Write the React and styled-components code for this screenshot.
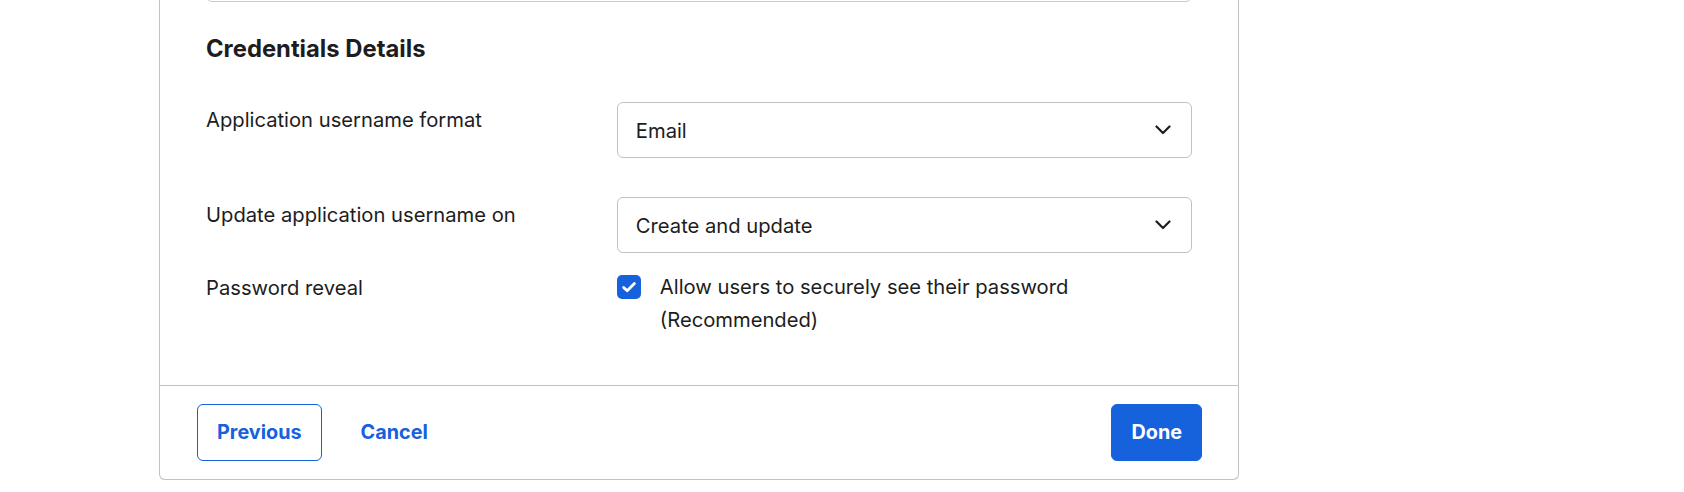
import styled, { createGlobalStyle } from "styled-components";

const GlobalStyle = createGlobalStyle`
  body {
    margin: 0;
    background: #ffffff;
    font-family: Inter, "Noto Sans", "Liberation Sans", sans-serif;
    color: #1d1d21;
    overflow: hidden;
  }
`;

const Card = styled.section`
  box-sizing: border-box;
  width: 1080px;
  margin: -54px 0 0 159px;
  background: #ffffff;
  border: 1px solid #c1c1c8;
  border-top: none;
  border-radius: 0 0 6px 6px;
  box-shadow: 0 3px 3px -2px rgba(29, 29, 33, 0.1);
`;

const Body = styled.div`
  padding: 0 46px 48px;
`;

const PrevField = styled.div`
  box-sizing: border-box;
  height: 56px;
  border: 1px solid #c9c9d0;
  border-radius: 6px;
`;

const Heading = styled.h2`
  margin: 33px 0 38px;
  font-size: 23.8px;
  line-height: 28.8px;
  font-weight: 700;
  letter-spacing: 0;
`;

const Row = styled.div`
  display: grid;
  grid-template-columns: 5fr 7fr;
  margin-bottom: ${(p) => p.$gap ?? 0}px;
`;

const Label = styled.label`
  font-size: 20.2px;
  line-height: 33.6px;
  padding-top: 1px;
`;

const Select = styled.div`
  box-sizing: border-box;
  height: 56px;
  display: flex;
  align-items: center;
  justify-content: space-between;
  padding: 1px 20px 0 18px;
  border: 1px solid #c1c1c8;
  border-radius: 6px;
  font-size: 20.2px;
  line-height: 33.6px;
`;

const CheckRow = styled.div`
  display: flex;
  align-items: flex-start;
  gap: 19px;
`;

const Box = styled.span`
  flex: none;
  width: 24px;
  height: 24px;
  margin-top: 5px;
  border-radius: 5px;
  background: #1662dd;
  display: flex;
  align-items: center;
  justify-content: center;
`;

const CheckText = styled.span`
  max-width: 480px;
  font-size: 20.2px;
  line-height: 33.6px;
`;

const Footer = styled.footer`
  display: flex;
  justify-content: space-between;
  align-items: center;
  padding: 18px 36px 18px 37px;
  border-top: 1px solid #c1c1c8;
`;

const Group = styled.div`
  display: flex;
  gap: 19px;
`;

const Button = styled.button`
  box-sizing: border-box;
  height: 57px;
  padding: 0 19px;
  border-radius: 6px;
  font-family: inherit;
  font-size: 19.8px;
  font-weight: 700;
  cursor: pointer;
  border: 1px solid
    ${(p) => (p.$variant === "ghost" ? "transparent" : "#1662dd")};
  background: ${(p) => (p.$variant === "primary" ? "#1662dd" : "#ffffff")};
  color: ${(p) => (p.$variant === "primary" ? "#ffffff" : "#1662dd")};
`;

const Chevron = () => (
  <svg width="16" height="10" viewBox="0 0 16 10" fill="none">
    <path
      d="M1.5 1.5 8 8l6.5-6.5"
      stroke="#1d1d21"
      strokeWidth="2.2"
      strokeLinecap="round"
      strokeLinejoin="round"
    />
  </svg>
);

const Check = () => (
  <svg width="18" height="18" viewBox="0 0 18 18" fill="none">
    <path
      d="M3.6 9.4 7.2 12.8 14.4 5.4"
      stroke="#ffffff"
      strokeWidth="2.8"
      strokeLinecap="round"
      strokeLinejoin="round"
    />
  </svg>
);

export default function App() {
  return (
    <>
      <GlobalStyle />
      <Card>
        <Body>
          <PrevField />
          <Heading>Credentials Details</Heading>

          <Row $gap={39}>
            <Label>Application username format</Label>
            <Select>
              <span>Email</span>
              <Chevron />
            </Select>
          </Row>

          <Row $gap={17}>
            <Label>Update application username on</Label>
            <Select>
              <span>Create and update</span>
              <Chevron />
            </Select>
          </Row>

          <Row>
            <Label>Password reveal</Label>
            <CheckRow>
              <Box>
                <Check />
              </Box>
              <CheckText>
                Allow users to securely see their password (Recommended)
              </CheckText>
            </CheckRow>
          </Row>
        </Body>

        <Footer>
          <Group>
            <Button>Previous</Button>
            <Button $variant="ghost">Cancel</Button>
          </Group>
          <Button $variant="primary">Done</Button>
        </Footer>
      </Card>
    </>
  );
}
